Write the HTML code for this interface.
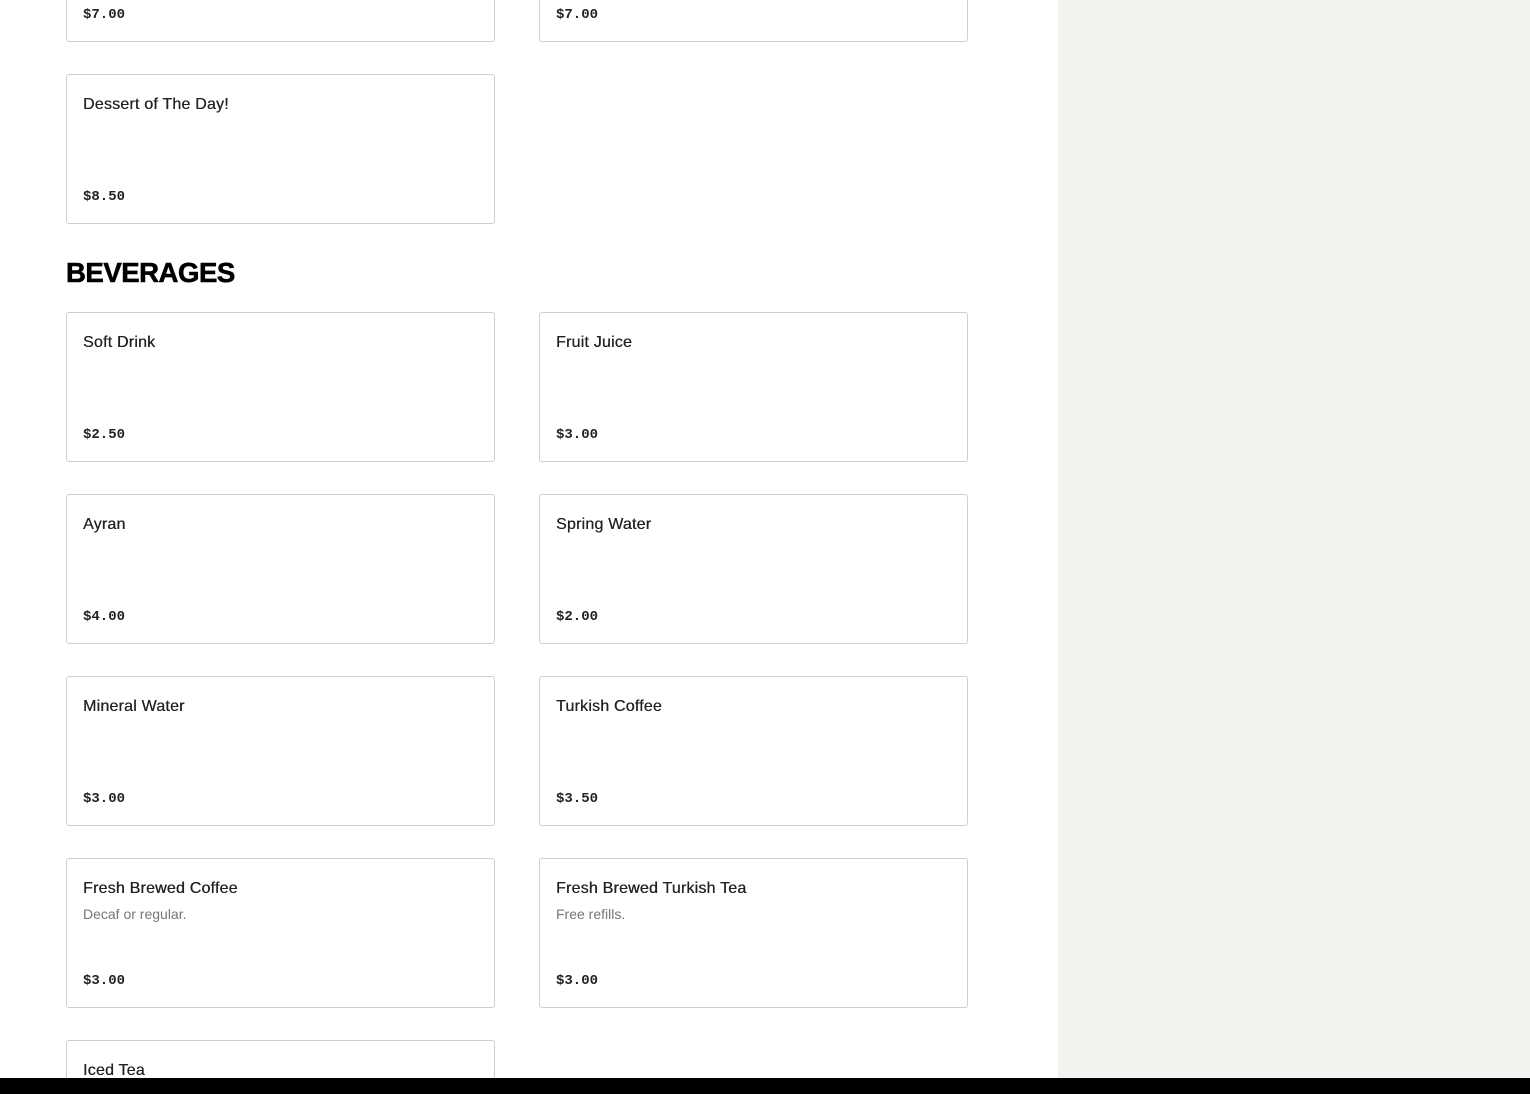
<!DOCTYPE html>
<html><head><meta charset="utf-8"><style>
*{margin:0;padding:0;box-sizing:border-box}
html,body{width:1530px;height:1094px;overflow:hidden}
body{background:#fff;position:relative;font-family:"Liberation Sans",sans-serif}
.side{position:absolute;left:1058px;top:0;width:472px;height:1094px;background:#f3f2ef}
.bar{position:absolute;left:0;top:1078px;width:1530px;height:16px;background:#000;z-index:5}
.card{position:absolute;width:429px;height:150px;border:1px solid #cfcfcf;border-radius:3px;background:#fff;overflow:hidden}
.t{position:absolute;left:16px;top:21px;font-size:16px;color:#222;letter-spacing:0.2px;text-shadow:0.3px 0 0 #222}
.d{position:absolute;left:16px;top:47px;font-size:14px;color:#777}
.p{position:absolute;left:16px;top:114px;font-family:"Liberation Mono",monospace;font-size:14px;font-weight:bold;color:#222}
h2{position:absolute;left:66px;top:257px;font-size:28px;font-weight:900;letter-spacing:-0.5px;color:#000;transform:scaleX(0.985);transform-origin:left;-webkit-text-stroke:0.6px #000}
</style></head><body>
<div class="side"></div>
<div class="card" style="left:66px;top:-108px"><div class="p">$7.00</div></div>
<div class="card" style="left:539px;top:-108px"><div class="p">$7.00</div></div>
<div class="card" style="left:66px;top:74px"><div class="t">Dessert of The Day!</div><div class="p">$8.50</div></div>
<h2>BEVERAGES</h2>
<div class="card" style="left:66px;top:312px"><div class="t">Soft Drink</div><div class="p">$2.50</div></div>
<div class="card" style="left:539px;top:312px"><div class="t">Fruit Juice</div><div class="p">$3.00</div></div>
<div class="card" style="left:66px;top:494px"><div class="t">Ayran</div><div class="p">$4.00</div></div>
<div class="card" style="left:539px;top:494px"><div class="t">Spring Water</div><div class="p">$2.00</div></div>
<div class="card" style="left:66px;top:676px"><div class="t">Mineral Water</div><div class="p">$3.00</div></div>
<div class="card" style="left:539px;top:676px"><div class="t">Turkish Coffee</div><div class="p">$3.50</div></div>
<div class="card" style="left:66px;top:858px"><div class="t">Fresh Brewed Coffee</div><div class="d">Decaf or regular.</div><div class="p">$3.00</div></div>
<div class="card" style="left:539px;top:858px"><div class="t">Fresh Brewed Turkish Tea</div><div class="d">Free refills.</div><div class="p">$3.00</div></div>
<div class="card" style="left:66px;top:1040px;height:54px;border-bottom:none"><div class="t">Iced Tea</div></div>
<div class="bar"></div>
</body></html>
